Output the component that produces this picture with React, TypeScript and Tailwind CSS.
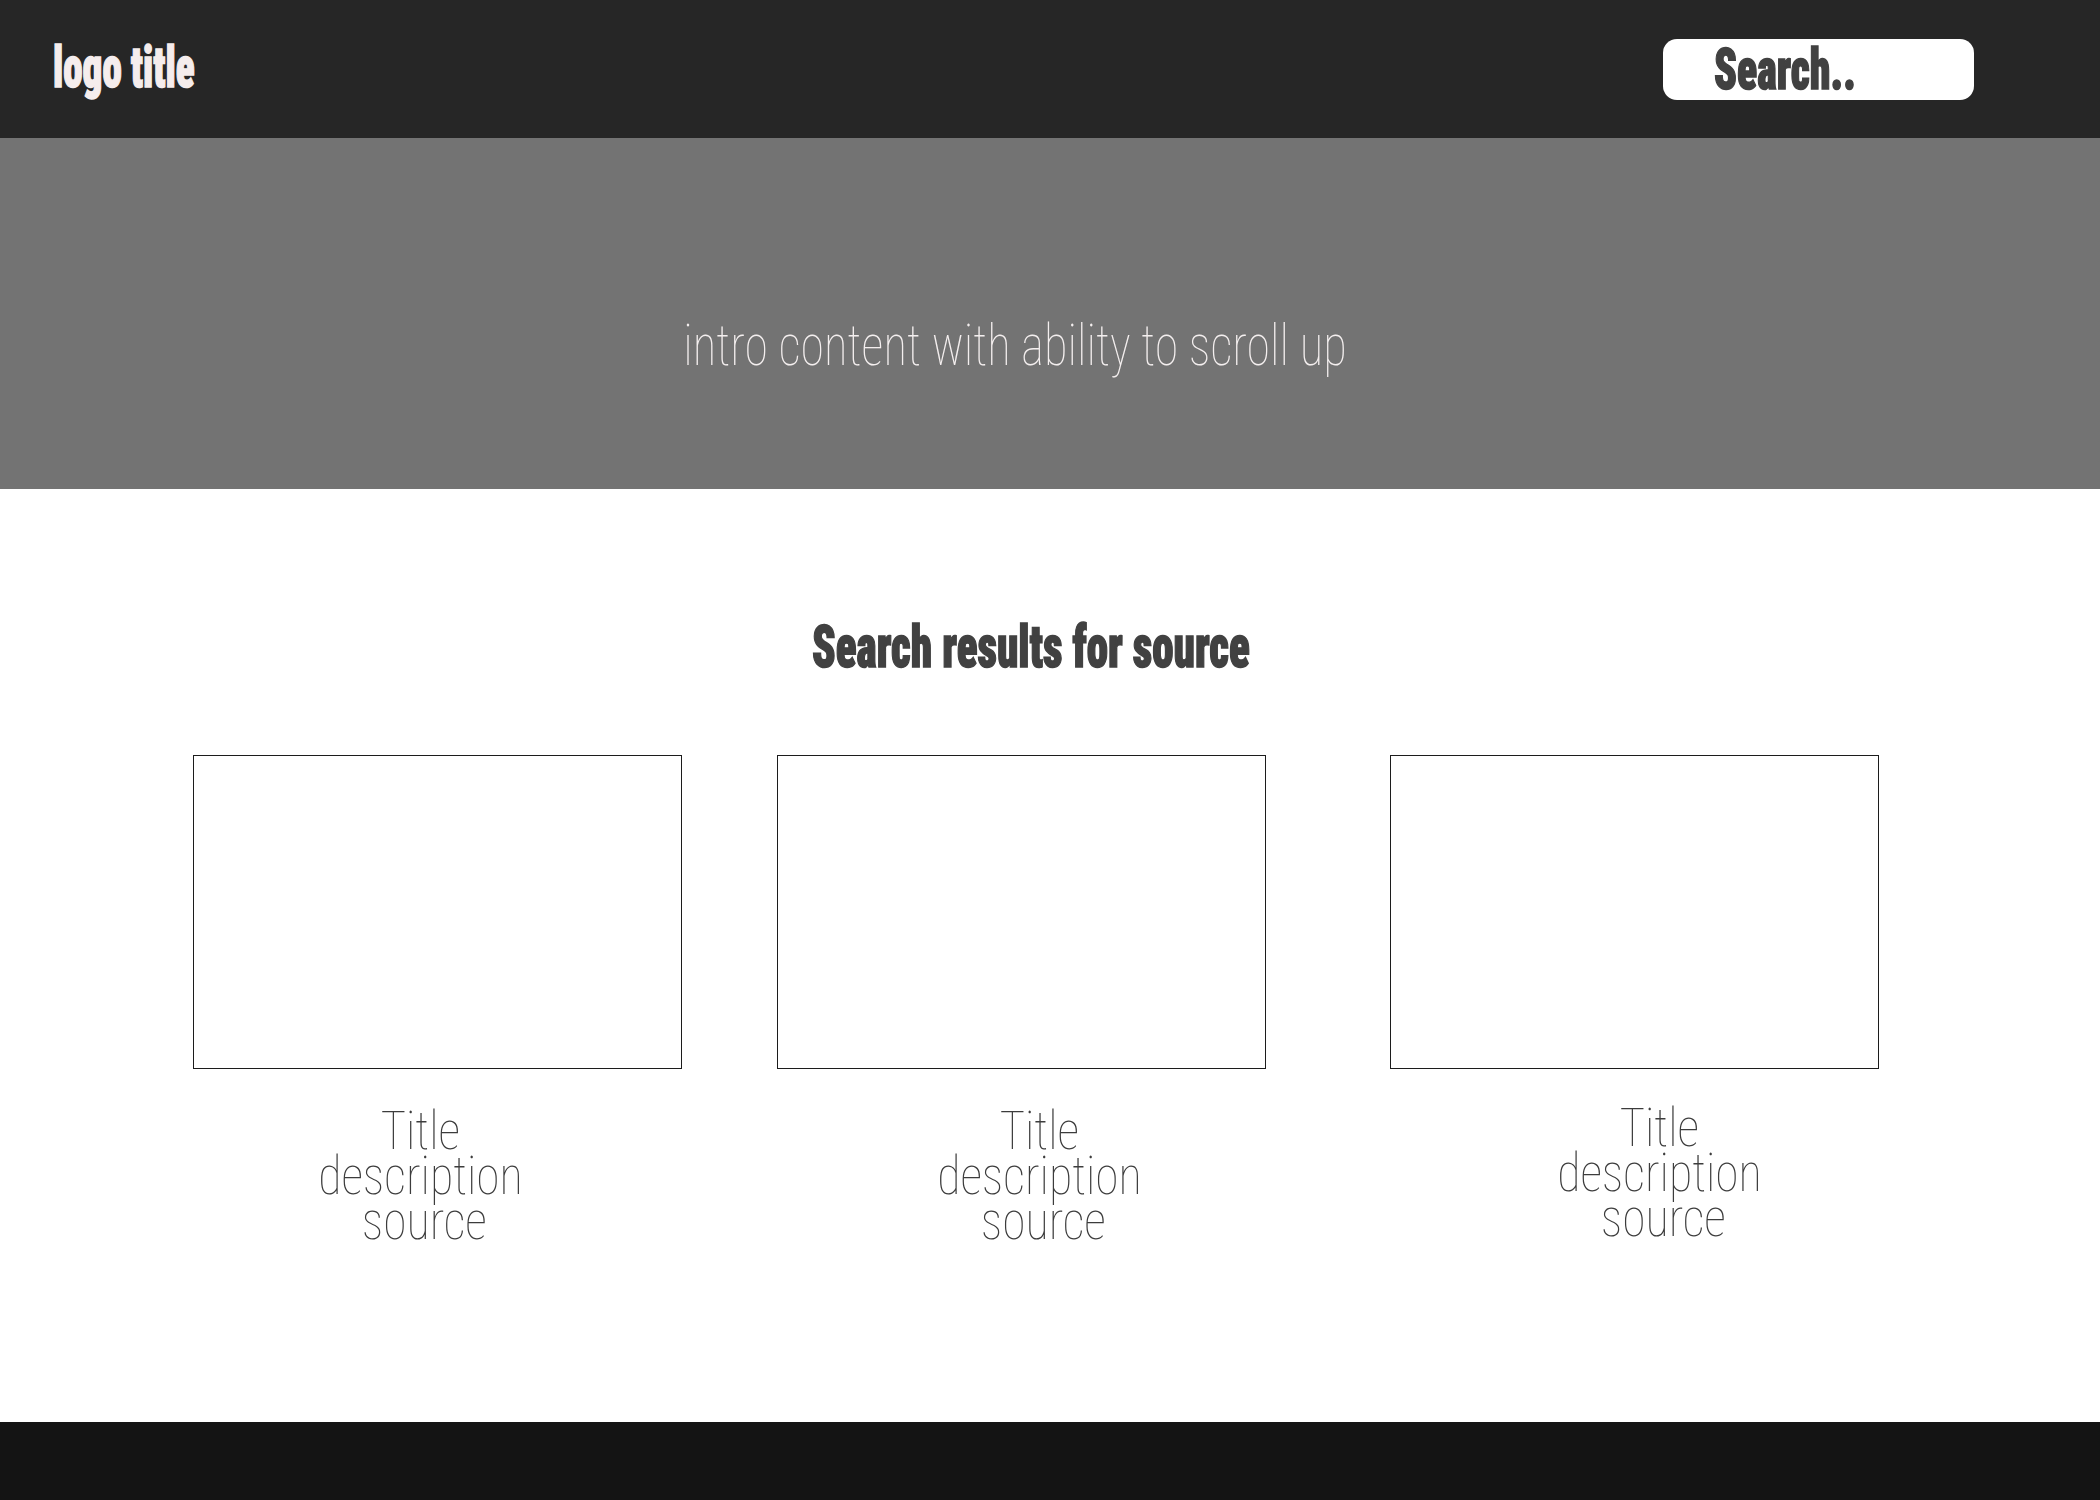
const heavy = { fontFamily: '"Roboto Condensed", "Roboto", sans-serif' };

const cards = [
  { id: 1, box: '', text: '-translate-x-[17px]' },
  { id: 2, box: 'ml-[95px]', text: 'translate-x-[18px]' },
  { id: 3, box: 'ml-[124px]', text: 'translate-x-[25px] -translate-y-[3px]' },
];

export default function App() {
  return (
    <div className="w-[2100px] h-[1500px] flex flex-col bg-white overflow-hidden" style={heavy}>
      {/* Header */}
      <header className="h-[138px] shrink-0 bg-[#262626] flex items-center justify-between pl-[53px] pr-[126px]">
        <div className="text-[58px] leading-none font-black text-[#f5eded] [-webkit-text-stroke:1.5px_#f5eded] origin-left scale-x-[0.675] -mt-[4px]">
          logo title
        </div>
        <div className="w-[311px] h-[61px] rounded-[14px] bg-white flex items-center pl-[51px]">
          <span className="block text-[58px] leading-none font-black text-[#414141] [-webkit-text-stroke:1.5px_#414141] origin-left scale-x-[0.72]">
            Search..
          </span>
        </div>
      </header>

      {/* Intro */}
      <section className="h-[351px] shrink-0 bg-[#737373] pt-[178px]">
        <div className="text-center text-[58px] leading-none font-thin text-[#f4efef] scale-x-[0.837] -translate-x-[35px]">
          intro content with ability to scroll up
        </div>
      </section>

      {/* Results */}
      <main className="flex-1 pt-[128px]">
        <h1 className="text-center text-[59px] leading-none font-black text-[#414141] [-webkit-text-stroke:1.5px_#414141] scale-x-[0.73] translate-x-[-19px]">
          Search results for source
        </h1>

        <div className="flex pl-[193px] mt-[79px]">
          {cards.map(c => (
            <div key={c.id} className={`w-[489px] ${c.box}`}>
              <div className="h-[314px] border border-[#1c1c1c]" />
              <div className={`mt-[39px] text-center text-[54px] leading-[45px] font-thin text-[#3c3c3c] ${c.text}`}>
                <div className="scale-x-[0.89]">Title</div>
                <div className="scale-x-[0.89]">description</div>
                <div className="scale-x-[0.89] translate-x-[4px]">source</div>
              </div>
            </div>
          ))}
        </div>
      </main>

      {/* Footer */}
      <footer className="h-[78px] shrink-0 bg-[#141414]" />
    </div>
  );
}
